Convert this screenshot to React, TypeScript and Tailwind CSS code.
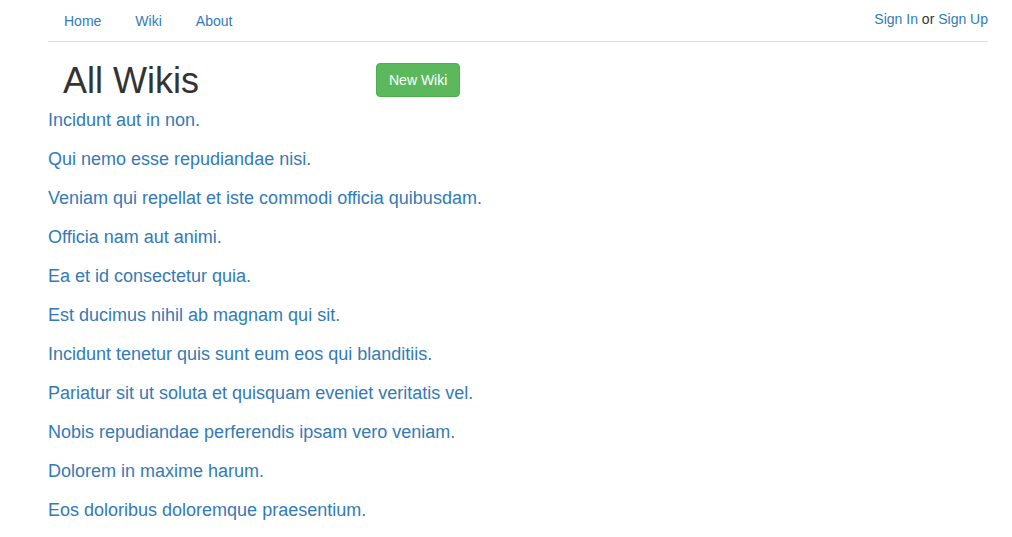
import React from "react";

const items = [
  "Incidunt aut in non.",
  "Qui nemo esse repudiandae nisi.",
  "Veniam qui repellat et iste commodi officia quibusdam.",
  "Officia nam aut animi.",
  "Ea et id consectetur quia.",
  "Est ducimus nihil ab magnam qui sit.",
  "Incidunt tenetur quis sunt eum eos qui blanditiis.",
  "Pariatur sit ut soluta et quisquam eveniet veritatis vel.",
  "Nobis repudiandae perferendis ipsam vero veniam.",
  "Dolorem in maxime harum.",
  "Eos doloribus doloremque praesentium.",
];

export default function App() {
  return (
    <div
      className="min-h-[537px] bg-white text-[#333] text-[14px]"
      style={{ fontFamily: '"Liberation Sans", Arial, sans-serif' }}
    >
      <div className="ml-[48px] w-[940px]">
        <nav className="flex items-center justify-between border-b border-[#ddd] h-[42px]">
          <ul className="flex">
            {["Home", "Wiki", "About"].map((t) => (
              <li key={t} className="mr-[2px]">
                <a href="#" className="block px-4 leading-[20px] py-[10px] text-[#337ab7]">
                  {t}
                </a>
              </li>
            ))}
          </ul>
          <div className="leading-[20px] pb-[4px]">
            <a href="#" className="text-[#337ab7]">Sign In</a>
            <span> or </span>
            <a href="#" className="text-[#337ab7]">Sign Up</a>
          </div>
        </nav>
        <div className="flex items-start pt-[20px]">
          <h1 className="w-[328px] pl-[15px] text-[36px] leading-[38px] font-normal text-[#333]">
            All Wikis
          </h1>
          <button className="mt-[1px] h-[34px] px-[12px] rounded-[4px] border border-[#4cae4c] bg-[#5cb85c] text-white text-[14px] leading-[20px]">
            New Wiki
          </button>
        </div>
        <div className="mt-[0.5px]">
          {items.map((t, i) => (
            <div key={i} className="text-[18px] leading-[39.1px]">
              <a href="#" className="text-[#337ab7]">{t}</a>
            </div>
          ))}
        </div>
      </div>
    </div>
  );
}
